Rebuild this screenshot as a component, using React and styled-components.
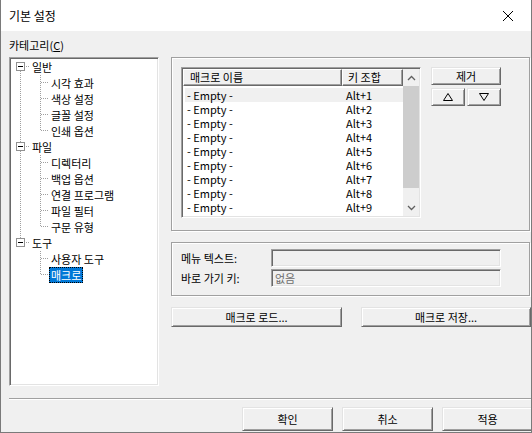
import styled, { createGlobalStyle } from "styled-components";

const GlobalStyle = createGlobalStyle`
  body {
    margin: 0;
    background: #ffffff;
    font-family: "Noto Sans CJK KR", "Noto Sans", sans-serif;
    font-size: 11px;
    color: #000;
  }
  * { box-sizing: border-box; }
`;

const categories = [
  { label: "일반", children: ["시각 효과", "색상 설정", "글꼴 설정", "인쇄 옵션"] },
  { label: "파일", children: ["디렉터리", "백업 옵션", "연결 프로그램", "파일 필터", "구문 유형"] },
  { label: "도구", children: ["사용자 도구", "매크로"] },
];

const selectedNode = "매크로";

const macros = Array.from({ length: 10 }, (_, i) => ({
  name: "- Empty -",
  keys: `Alt+${(i + 1) % 10}`,
}));

export default function App() {
  return (
    <>
      <GlobalStyle />
      <Window>
        <TitleBar>
          <Title>기본 설정</Title>
          <CloseGlyph width="12" height="12" viewBox="0 0 12 12">
            <path d="M1 1 L11 11 M11 1 L1 11" stroke="#000" strokeWidth="1" />
          </CloseGlyph>
        </TitleBar>

        <Body>
          <CategoryLabel>
            카테고리(<u>C</u>)
          </CategoryLabel>

          <Main>
            <Tree>
              {categories.map((cat, ci) => {
                const first = ci === 0;
                const last = ci === categories.length - 1;
                return (
                  <div key={cat.label}>
                    <TreeRow>
                      <Expander first={first} last={last} />
                      <NodeLabel>{cat.label}</NodeLabel>
                    </TreeRow>
                    {cat.children.map((child, i) => (
                      <TreeRow key={child}>
                        <Connector x={9} kind={last ? "blank" : "pipe"} />
                        <Connector
                          x={10}
                          kind={i === cat.children.length - 1 ? "elbow" : "tee"}
                        />
                        <NodeLabel $selected={child === selectedNode}>{child}</NodeLabel>
                      </TreeRow>
                    ))}
                  </div>
                );
              })}
            </Tree>

            <Pane>
              <GroupBox $height={174}>
                <MacroArea>
                  <ListView>
                    <ListContent>
                      <HeaderRow>
                        <HeaderCell $width={159}>매크로 이름</HeaderCell>
                        <HeaderCell $width={61} $pad={5}>키 조합</HeaderCell>
                      </HeaderRow>
                      <Rows>
                        {macros.map((m, i) => (
                          <ListRow key={i} $hot={i === 0}>
                            <NameCell>{m.name}</NameCell>
                            <span>{m.keys}</span>
                          </ListRow>
                        ))}
                      </Rows>
                    </ListContent>
                    <ScrollBar>
                      <ArrowBox>
                        <svg width="9" height="6" viewBox="0 0 9 6">
                          <path d="M1 5 L4.5 1.5 L8 5" fill="none" stroke="#606060" strokeWidth="1.3" />
                        </svg>
                      </ArrowBox>
                      <Track>
                        <Thumb />
                      </Track>
                      <ArrowBox>
                        <svg width="9" height="6" viewBox="0 0 9 6">
                          <path d="M1 1 L4.5 4.5 L8 1" fill="none" stroke="#606060" strokeWidth="1.3" />
                        </svg>
                      </ArrowBox>
                    </ScrollBar>
                  </ListView>

                  <SideButtons>
                    <Button $width={70} $height={18}>제거</Button>
                    <MoveRow>
                      <Button $width={34} $height={18} aria-label="위로">
                        <Triangle width="10" height="8" viewBox="0 0 10 8">
                          <path d="M5 0.5 L9.5 7.5 L0.5 7.5 Z" />
                        </Triangle>
                      </Button>
                      <Button $width={34} $height={18} aria-label="아래로">
                        <Triangle width="10" height="8" viewBox="0 0 10 8">
                          <path d="M0.5 0.5 L9.5 0.5 L5 7.5 Z" />
                        </Triangle>
                      </Button>
                    </MoveRow>
                  </SideButtons>
                </MacroArea>
              </GroupBox>

              <GroupBox $height={54} $gap={11}>
                <FieldGrid>
                  <FieldLabel>메뉴 텍스트:</FieldLabel>
                  <Field />
                  <FieldLabel>바로 가기 키:</FieldLabel>
                  <Field>없음</Field>
                </FieldGrid>
              </GroupBox>

              <FileButtons>
                <Button $width={171} $height={20}>매크로 로드...</Button>
                <Button $width={170} $height={20}>매크로 저장...</Button>
              </FileButtons>
            </Pane>
          </Main>

          <Separator />

          <Footer>
            <Button $width={91} $height={24}>확인</Button>
            <Button $width={91} $height={24}>취소</Button>
            <Button $width={91} $height={24}>적용</Button>
          </Footer>
        </Body>
      </Window>
    </>
  );
}

/* tree connectors: dotted guide lines drawn per 16px row */
function Connector({ x, kind }) {
  return (
    <Gutter width="19" height="16">
      {kind !== "blank" && (
        <line x1={x + 0.5} y1="0" x2={x + 0.5} y2={kind === "elbow" ? 8 : 16} />
      )}
      {(kind === "tee" || kind === "elbow") && (
        <line x1={x + 1} y1="7.5" x2="19" y2="7.5" />
      )}
    </Gutter>
  );
}

function Expander({ first, last }) {
  return (
    <Gutter width="19" height="16">
      {!first && <line x1="9.5" y1="0" x2="9.5" y2="3" />}
      {!last && <line x1="9.5" y1="12" x2="9.5" y2="16" />}
      <line x1="15" y1="7.5" x2="19" y2="7.5" />
      <rect x="5.5" y="3.5" width="8" height="8" fill="#fff" stroke="#919191" strokeDasharray="none" />
      <line x1="7" y1="7.5" x2="12" y2="7.5" stroke="#000" strokeDasharray="none" />
    </Gutter>
  );
}

const Window = styled.div`
  width: 532px;
  height: 433px;
  border: 1px solid #7a7a7a;
  border-top: 0;
  background: #f0f0f0;
  display: flex;
  flex-direction: column;
  overflow: hidden;
`;

const TitleBar = styled.div`
  height: 31px;
  flex: none;
  background: #fff;
  display: flex;
  align-items: center;
  justify-content: space-between;
  padding: 0 17px 0 8px;
`;

const Title = styled.span`
  font-size: 12px;
  line-height: 16px;
`;

const CloseGlyph = styled.svg`
  display: block;
`;

const Body = styled.div`
  flex: 1;
  padding-left: 8px;
  display: flex;
  flex-direction: column;
  overflow: hidden;
`;

const CategoryLabel = styled.div`
  margin-top: 6px;
  height: 16px;
  line-height: 16px;
  u {
    text-underline-offset: 1px;
  }
`;

const Main = styled.div`
  margin-top: 4px;
  display: flex;
  height: 329px;
  flex: none;
`;

const sunken = `
  border: 1px solid;
  border-color: #a0a0a0 #fff #fff #a0a0a0;
  padding: 1px;
  box-shadow: inset 1px 1px #696969, inset -1px -1px #e3e3e3;
`;

const Tree = styled.div`
  ${sunken}
  width: 150px;
  height: 329px;
  background: #fff;
  overflow: hidden;
`;

const TreeRow = styled.div`
  display: flex;
  height: 16px;
`;

const Gutter = styled.svg`
  display: block;
  flex: none;
  stroke: #a0a0a0;
  stroke-width: 1;
  stroke-dasharray: 1 1;
`;

const NodeLabel = styled.span`
  height: 16px;
  line-height: 16px;
  padding: 0 2px;
  white-space: nowrap;
  background: ${(p) => (p.$selected ? "#0078d7" : "transparent")};
  color: ${(p) => (p.$selected ? "#fff" : "#000")};
  outline: ${(p) => (p.$selected ? "1px dotted #000" : "none")};
  outline-offset: -1px;
`;

const Pane = styled.div`
  margin-left: 12px;
  width: 360px;
  display: flex;
  flex-direction: column;
`;

const GroupBox = styled.div`
  width: 359px;
  height: ${(p) => p.$height}px;
  margin-top: ${(p) => p.$gap || 0}px;
  border: 1px solid #a0a0a0;
  box-shadow: inset 1px 1px #fff, 1px 1px #fff;
  padding: 9px;
  flex: none;
`;

const MacroArea = styled.div`
  display: flex;
  gap: 10px;
`;

const ListView = styled.div`
  ${sunken}
  width: 240px;
  height: 151px;
  background: #fff;
  display: flex;
  overflow: hidden;
`;

const ListContent = styled.div`
  width: 220px;
  overflow: hidden;
`;

const raised = `
  background: #f0f0f0;
  border: 1px solid;
  border-color: #e3e3e3 #696969 #696969 #e3e3e3;
  box-shadow: inset 1px 1px #fff, inset -1px -1px #a0a0a0;
`;

const HeaderRow = styled.div`
  display: flex;
  height: 17px;
`;

const HeaderCell = styled.div`
  ${raised}
  border-color: #fff #696969 #696969 #fff;
  box-shadow: inset -1px -1px #a0a0a0;
  width: ${(p) => p.$width}px;
  padding-left: ${(p) => p.$pad || 6}px;
  line-height: 15px;
  white-space: nowrap;
  overflow: hidden;
`;

const Rows = styled.div`
  padding: 2px 0 0 2px;
`;

const ListRow = styled.div`
  display: flex;
  height: 14px;
  line-height: 14px;
  width: 218px;
  background: ${(p) => (p.$hot ? "#f0f0f0" : "transparent")};
  white-space: nowrap;
`;

const NameCell = styled.span`
  width: 161px;
  padding-left: 2px;
`;

const ScrollBar = styled.div`
  width: 16px;
  display: flex;
  flex-direction: column;
  background: #f0f0f0;
`;

const ArrowBox = styled.div`
  height: 17px;
  display: flex;
  align-items: center;
  justify-content: center;
  flex: none;
`;

const Track = styled.div`
  flex: 1;
`;

const Thumb = styled.div`
  height: 102px;
  background: #cdcdcd;
`;

const SideButtons = styled.div`
  display: flex;
  flex-direction: column;
  gap: 3px;
`;

const MoveRow = styled.div`
  display: flex;
  gap: 2px;
`;

const Button = styled.button`
  ${raised}
  width: ${(p) => p.$width}px;
  height: ${(p) => p.$height}px;
  flex: none;
  padding: 0;
  font-family: inherit;
  font-size: 11px;
  line-height: 14px;
  color: #000;
  display: flex;
  align-items: center;
  justify-content: center;
`;

const Triangle = styled.svg`
  display: block;
  fill: none;
  stroke: #000;
  stroke-width: 1;
`;

const FieldGrid = styled.div`
  display: grid;
  grid-template-columns: 90px 230px;
  row-gap: 2px;
  margin-top: -3px;
  align-items: center;
`;

const FieldLabel = styled.span`
  line-height: 18px;
`;

const Field = styled.div`
  ${sunken}
  height: 18px;
  background: #f0f0f0;
  color: #6d6d6d;
  padding: 1px 3px;
  line-height: 14px;
`;

const FileButtons = styled.div`
  margin-top: 11px;
  display: flex;
  gap: 19px;
`;

const Separator = styled.div`
  margin-top: 12px;
  height: 2px;
  flex: none;
  border-top: 1px solid #a0a0a0;
  border-bottom: 1px solid #fff;
`;

const Footer = styled.div`
  margin-top: 7px;
  padding-left: 233px;
  display: flex;
  gap: 9px;
`;
